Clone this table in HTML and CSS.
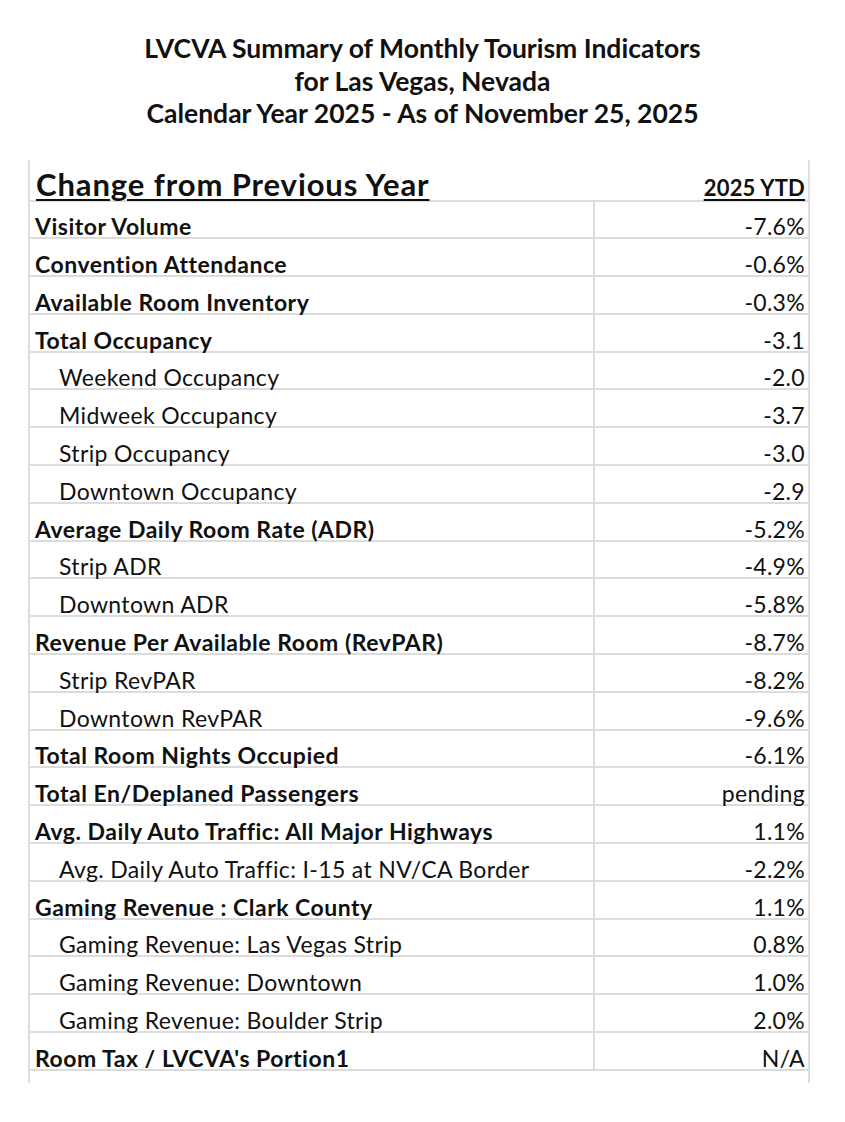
FILE: index.html
```html
<!DOCTYPE html>
<html lang="en">
<head>
<meta charset="utf-8">
<title>LVCVA Summary of Monthly Tourism Indicators</title>
<link rel="stylesheet" href="styles.css">
</head>
<body>
<div class="page">
  <h1 class="title">LVCVA Summary of Monthly Tourism Indicators<br>for Las Vegas, Nevada<br>Calendar Year 2025 - As of November 25, 2025</h1>
  <table class="sheet">
    <thead>
      <tr class="head">
        <th class="h-label"><span class="u">Change from Previous Year</span></th>
        <th class="h-val"><span class="u">2025 YTD</span></th>
      </tr>
    </thead>
    <tbody>
      <tr><td class="lbl b">Visitor Volume</td><td class="val">-7.6%</td></tr>
      <tr><td class="lbl b">Convention Attendance</td><td class="val">-0.6%</td></tr>
      <tr><td class="lbl b">Available Room Inventory</td><td class="val">-0.3%</td></tr>
      <tr><td class="lbl b">Total Occupancy</td><td class="val">-3.1</td></tr>
      <tr><td class="lbl ind">Weekend Occupancy</td><td class="val">-2.0</td></tr>
      <tr><td class="lbl ind">Midweek Occupancy</td><td class="val">-3.7</td></tr>
      <tr><td class="lbl ind">Strip Occupancy</td><td class="val">-3.0</td></tr>
      <tr><td class="lbl ind">Downtown Occupancy</td><td class="val">-2.9</td></tr>
      <tr><td class="lbl b">Average Daily Room Rate (ADR)</td><td class="val">-5.2%</td></tr>
      <tr><td class="lbl ind">Strip ADR</td><td class="val">-4.9%</td></tr>
      <tr><td class="lbl ind">Downtown ADR</td><td class="val">-5.8%</td></tr>
      <tr><td class="lbl b">Revenue Per Available Room (RevPAR)</td><td class="val">-8.7%</td></tr>
      <tr><td class="lbl ind">Strip RevPAR</td><td class="val">-8.2%</td></tr>
      <tr><td class="lbl ind">Downtown RevPAR</td><td class="val">-9.6%</td></tr>
      <tr><td class="lbl b">Total Room Nights Occupied</td><td class="val">-6.1%</td></tr>
      <tr><td class="lbl b">Total En/Deplaned Passengers</td><td class="val">pending</td></tr>
      <tr><td class="lbl b">Avg. Daily Auto Traffic: All Major Highways</td><td class="val">1.1%</td></tr>
      <tr><td class="lbl ind">Avg. Daily Auto Traffic: I-15 at NV/CA Border</td><td class="val">-2.2%</td></tr>
      <tr><td class="lbl b">Gaming Revenue : Clark County</td><td class="val">1.1%</td></tr>
      <tr><td class="lbl ind">Gaming Revenue: Las Vegas Strip</td><td class="val">0.8%</td></tr>
      <tr><td class="lbl ind">Gaming Revenue: Downtown</td><td class="val">1.0%</td></tr>
      <tr><td class="lbl ind">Gaming Revenue: Boulder Strip</td><td class="val">2.0%</td></tr>
      <tr><td class="lbl b">Room Tax / LVCVA's Portion1</td><td class="val">N/A</td></tr>
      <tr class="tail"><td></td><td></td></tr>
    </tbody>
  </table>
</div>
</body>
</html>
```
FILE: styles.css
```css
html, body {
  margin: 0;
  padding: 0;
  background: #ffffff;
}
body {
  font-family: Lato, "Open Sans", "Liberation Sans", sans-serif;
  color: #111111;
}
.page {
  width: 845px;
  padding-top: 32px;
}
.title {
  margin: 0;
  text-align: center;
  font-size: 26.5px;
  line-height: 32.5px;
  font-weight: 700;
  letter-spacing: 0;
}
.sheet {
  margin: 30px 0 0 28px;
  width: 782px;
  border-collapse: collapse;
  table-layout: fixed;
}
.sheet th, .sheet td {
  padding: 0;
  vertical-align: bottom;
}
.h-label {
  width: 558px;
  height: 40px;
  text-align: left;
  font-size: 31px;
  font-weight: 700;
  padding-left: 6px !important;
  padding-bottom: 0 !important;
  border-left: 2px solid #e1e1e1;
  border-bottom: 2px solid #dcdcdc;
  line-height: 31px;
  letter-spacing: 0.9px;
}
.h-val {
  text-align: right;
  font-size: 22px;
  font-weight: 700;
  padding-right: 3px !important;
  padding-bottom: 0 !important;
  border-right: 2px solid #e1e1e1;
  border-bottom: 2px solid #dcdcdc;
  line-height: 24px;
  letter-spacing: 0.2px;
}
.u {
  text-decoration: underline;
  text-decoration-thickness: 2px;
  text-underline-offset: 3px;
}
.sheet tbody td {
  height: 35.8px;
  border: 2px solid #dcdcdc;
  font-size: 23px;
  line-height: 22px;
  padding-bottom: 0;
}
.lbl {
  padding-left: 5px !important;
  letter-spacing: 0.5px;
}
.lbl.b {
  font-weight: 700;
}
.lbl.ind {
  padding-left: 29px !important;
  font-weight: 400;
  letter-spacing: 0.35px;
}
.val {
  text-align: right;
  padding-right: 3px !important;
  letter-spacing: 0.3px;
}
.sheet tbody tr.tail td {
  height: 12px;
  border-bottom: none;
  border-top: 2px solid #dcdcdc;
  padding: 0;
}
.sheet tbody tr.tail td:first-child {
  border-right: none;
}
.sheet tbody tr.tail td:last-child {
  border-left: none;
}
```
